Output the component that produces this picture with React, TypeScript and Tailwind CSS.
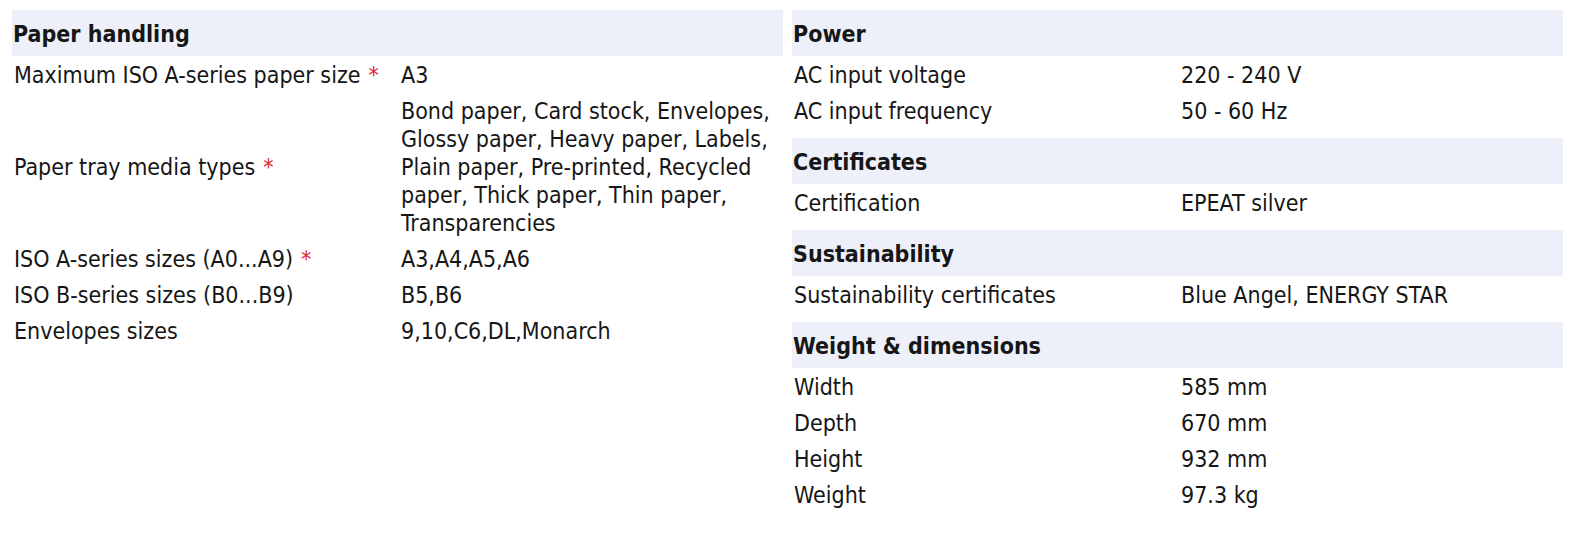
import React from "react";

type Row = { label: string; value: string; req?: boolean };
type Section = { title: string; rows: Row[] };

const left: Section[] = [
  {
    title: "Paper handling",
    rows: [
      { label: "Maximum ISO A-series paper size", value: "A3", req: true },
      {
        label: "Paper tray media types",
        value:
          "Bond paper, Card stock, Envelopes, Glossy paper, Heavy paper, Labels, Plain paper, Pre-printed, Recycled paper, Thick paper, Thin paper, Transparencies",
        req: true,
      },
      { label: "ISO A-series sizes (A0...A9)", value: "A3,A4,A5,A6", req: true },
      { label: "ISO B-series sizes (B0...B9)", value: "B5,B6" },
      { label: "Envelopes sizes", value: "9,10,C6,DL,Monarch" },
    ],
  },
];

const right: Section[] = [
  {
    title: "Power",
    rows: [
      { label: "AC input voltage", value: "220 - 240 V" },
      { label: "AC input frequency", value: "50 - 60 Hz" },
    ],
  },
  { title: "Certificates", rows: [{ label: "Certification", value: "EPEAT silver" }] },
  {
    title: "Sustainability",
    rows: [{ label: "Sustainability certificates", value: "Blue Angel, ENERGY STAR" }],
  },
  {
    title: "Weight & dimensions",
    rows: [
      { label: "Width", value: "585 mm" },
      { label: "Depth", value: "670 mm" },
      { label: "Height", value: "932 mm" },
      { label: "Weight", value: "97.3 kg" },
    ],
  },
];

function SectionBlock({ s }: { s: Section }) {
  return (
    <div className="flex flex-col">
      <div className="h-[46px] bg-[#edf0f9] flex items-center pl-[1px] pt-[1px] font-bold">
        {s.title}
      </div>
      {s.rows.map((r) => (
        <div key={r.label} className="flex items-center pt-[5px] pb-[3px]">
          <div className="w-[386px] shrink-0 pl-[2px] pr-[6px]">
            {r.label}
            {r.req && <span className="text-[#e0262b] ml-[8px]">*</span>}
          </div>
          <div className="flex-1 pl-[3px] pr-[4px]">{r.value}</div>
        </div>
      ))}
    </div>
  );
}

export default function App() {
  return (
    <div className="w-[1576px] h-[536px] bg-white text-[#161616] text-[23px] leading-[28px] font-stretch-condensed font-['DejaVu_Sans_Condensed','DejaVu_Sans',sans-serif] flex gap-[9px] pl-[12px] pt-[10px]">
      <div className="w-[771px] flex flex-col gap-[10px]">
        {left.map((s) => (
          <SectionBlock key={s.title} s={s} />
        ))}
      </div>
      <div className="w-[771px] flex flex-col gap-[10px]">
        {right.map((s) => (
          <SectionBlock key={s.title} s={s} />
        ))}
      </div>
    </div>
  );
}
